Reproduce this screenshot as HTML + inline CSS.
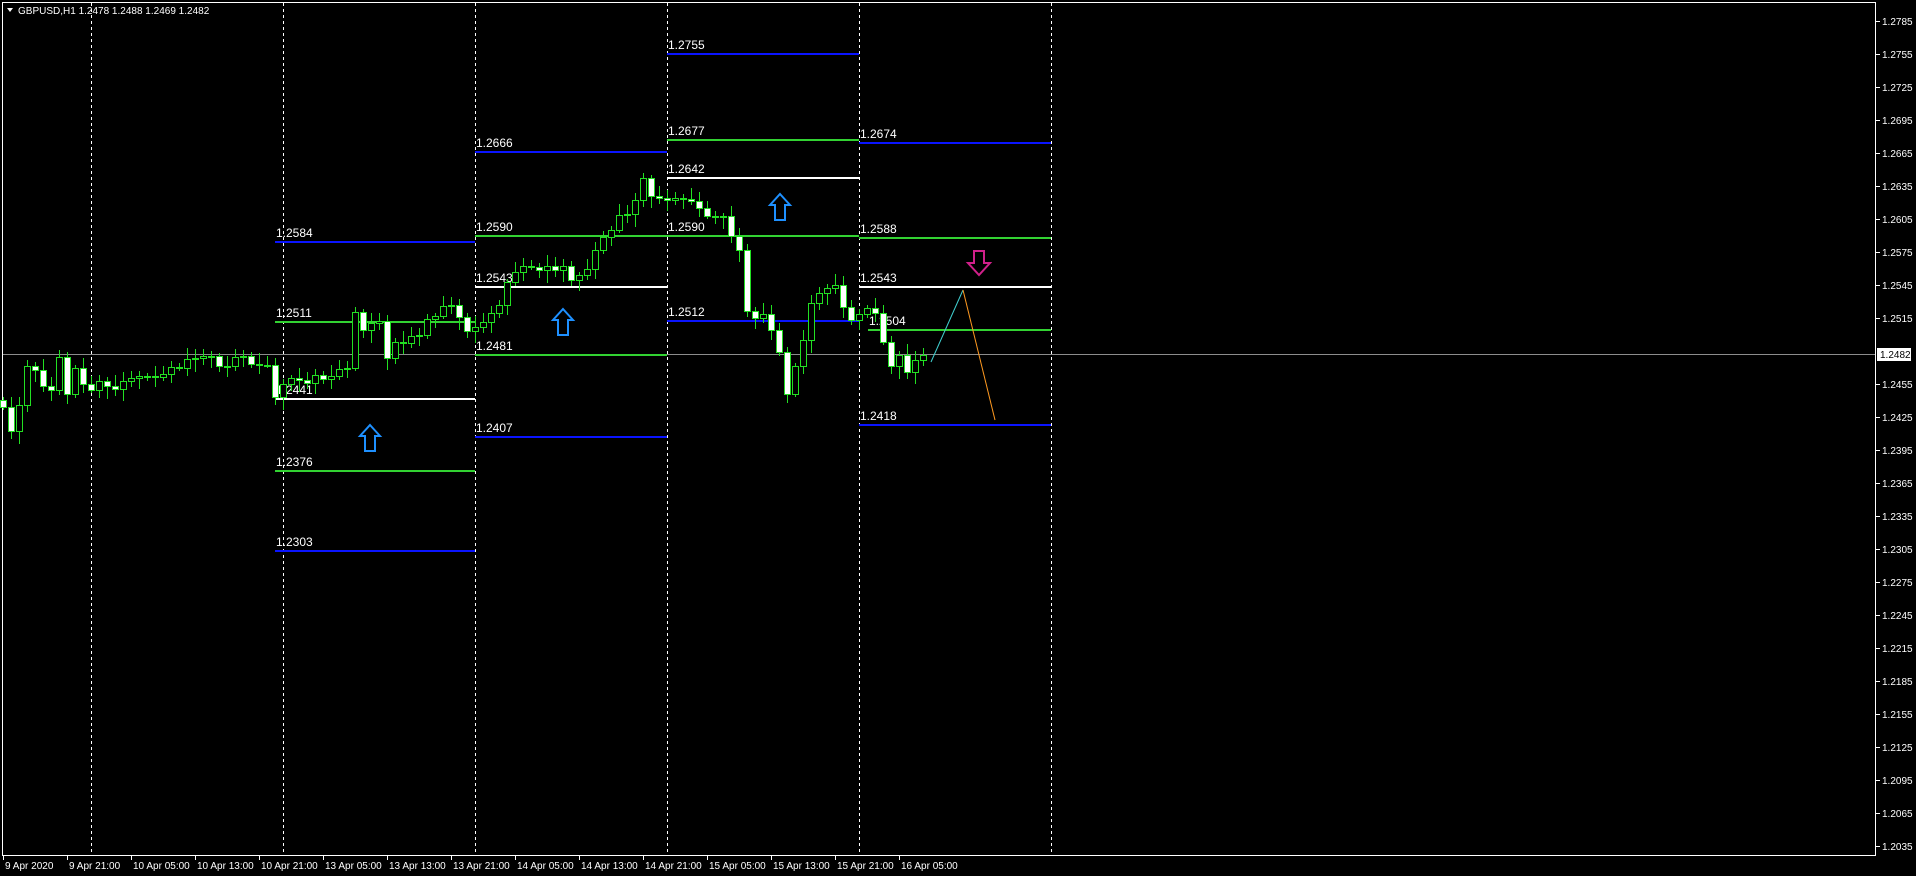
<!DOCTYPE html>
<html><head><meta charset="utf-8">
<style>
html,body{margin:0;padding:0;background:#000;width:1916px;height:876px;overflow:hidden}
svg{display:block}
text{font-family:"Liberation Sans",sans-serif}
</style></head>
<body>
<svg id="c" width="1916" height="876" viewBox="0 0 1916 876" xmlns="http://www.w3.org/2000/svg">
<rect width="1916" height="876" fill="#000"/>
<line x1="2" y1="2.5" x2="1876" y2="2.5" stroke="#fff" stroke-width="1"/>
<line x1="2.5" y1="2" x2="2.5" y2="855" stroke="#fff" stroke-width="1"/>
<line x1="1875.5" y1="2" x2="1875.5" y2="855" stroke="#fff" stroke-width="1"/>
<line x1="2" y1="855.5" x2="1876" y2="855.5" stroke="#fff" stroke-width="1"/>
<g stroke="#fff" stroke-width="1" stroke-dasharray="3,3">
<line x1="91.5" y1="3" x2="91.5" y2="855"/>
<line x1="283.5" y1="3" x2="283.5" y2="855"/>
<line x1="475.5" y1="3" x2="475.5" y2="855"/>
<line x1="667.5" y1="3" x2="667.5" y2="855"/>
<line x1="859.5" y1="3" x2="859.5" y2="855"/>
<line x1="1051.5" y1="3" x2="1051.5" y2="855"/>
</g>
<line x1="3" y1="354.5" x2="1875" y2="354.5" stroke="#8c8c8c" stroke-width="1"/>
<g id="levels"></g>
<g id="candles"></g>
<g fill="none" stroke="#1e90ff" stroke-width="2">
<path d="M370 425 L380 436 L375 436 L375 451 L365 451 L365 436 L360 436 Z"/>
<path d="M563 309 L573 320 L568 320 L568 335 L558 335 L558 320 L553 320 Z"/>
<path d="M780 194 L790 205 L785 205 L785 220 L775 220 L775 205 L770 205 Z"/>
</g>
<path d="M974 251 L984 251 L984 263 L990 263 L979 275 L968 263 L974 263 Z" fill="none" stroke="#d0208a" stroke-width="2"/>
<line x1="931" y1="362" x2="963" y2="290" stroke="#40d0d0" stroke-width="1"/>
<line x1="963" y1="290" x2="995" y2="420" stroke="#ff9a20" stroke-width="1"/>
<path d="M7 8 L13 8 L10 12 Z" fill="#fff"/>
<text x="18" y="14" fill="#fff" font-size="10">GBPUSD,H1  1.2478 1.2488 1.2469 1.2482</text>
<g id="axis"></g>
<rect x="1877" y="348" width="34" height="13" fill="#fff"/>
<text x="1880" y="358" fill="#000" font-size="10">1.2482</text>
</svg>
<script>
(function(){
var NS="http://www.w3.org/2000/svg";
function el(t,a,p,txt){var e=document.createElementNS(NS,t);for(var k in a)e.setAttribute(k,a[k]);if(txt)e.textContent=txt;p.appendChild(e);return e;}
var ax=document.getElementById('axis');
for(var i=0;i<=25;i++){var p=1.2785-i*0.003;var y=Math.round(285+(1.2545-p)*11000);
 if(Math.abs(p-1.2485)<0.0001)continue;
 el('line',{x1:1876,y1:y+.5,x2:1880,y2:y+.5,stroke:'#fff'},ax);
 el('text',{x:1882,y:y+4,fill:'#fff','font-size':'10'},ax,p.toFixed(4));}
var tl=["9 Apr 2020","9 Apr 21:00","10 Apr 05:00","10 Apr 13:00","10 Apr 21:00","13 Apr 05:00","13 Apr 13:00","13 Apr 21:00","14 Apr 05:00","14 Apr 13:00","14 Apr 21:00","15 Apr 05:00","15 Apr 13:00","15 Apr 21:00","16 Apr 05:00"];
for(var i=0;i<tl.length;i++){var x=3+64*i;
 el('line',{x1:x+.5,y1:855,x2:x+.5,y2:860,stroke:'#fff'},ax);
 el('text',{x:x+2,y:869,fill:'#fff','font-size':'10'},ax,tl[i]);}
var lv=document.getElementById('levels');
var B='#0a14ff',G='#32d232',W='#ffffff';
var L=[[275,475,[[1.2584,B],[1.2511,G],[1.2441,W],[1.2376,G],[1.2303,B]]],
[475,667,[[1.2666,B],[1.2590,G],[1.2543,W],[1.2481,G],[1.2407,B]]],
[667,859,[[1.2755,B],[1.2677,G],[1.2642,W],[1.2590,G],[1.2512,B]]],
[859,1051,[[1.2674,B],[1.2588,G],[1.2543,W],[1.2504,G],[1.2418,B]]]];
L.forEach(function(s){s[2].forEach(function(l){var y=Math.round(285+(1.2545-l[0])*11000);
 var x0=s[0]; if(l[0]==1.2504)x0=868;
 el('line',{x1:x0,y1:y,x2:s[1],y2:y,stroke:l[1],'stroke-width':2},lv);
 el('text',{x:x0+1,y:y-5,fill:'#fff','font-size':'12'},lv,l[0].toFixed(4));});});
var cl=[407,431,405,366,370,386,390,357,394,368,384,390,381,386,389,381,378,376,376,377,374,367,368,359,358,356,356,366,366,357,356,364,365,365,397,384,378,380,383,375,379,376,369,368,312,330,323,321,358,342,343,336,335,319,316,306,305,317,331,327,322,313,305,282,272,266,267,270,266,270,266,280,275,269,250,237,230,215,214,200,178,196,198,200,198,199,201,208,216,216,216,236,250,311,318,314,330,352,394,366,340,303,293,288,285,307,320,314,308,313,342,366,355,372,360,355];
var cg=document.getElementById('candles');var prev=400;
for(var i=0;i<cl.length;i++){var x=3+8*i,o=prev,c=cl[i];
 var r1=3+((i*7)%9),r2=3+((i*5)%11);
 var hi=Math.min(o,c)-r1,lo=Math.max(o,c)+r2;
 el('line',{x1:x+.5,y1:hi,x2:x+.5,y2:lo,stroke:'#22e022','stroke-width':1},cg);
 var bt=Math.min(o,c),h=Math.max(Math.abs(o-c),1);
 el('rect',{x:x-2.5,y:bt+.5,width:6,height:h,fill:(c>o?'#fff':'#000'),stroke:'#22e022','stroke-width':1},cg);
 prev=c;}
})();
</script>
</body></html>
